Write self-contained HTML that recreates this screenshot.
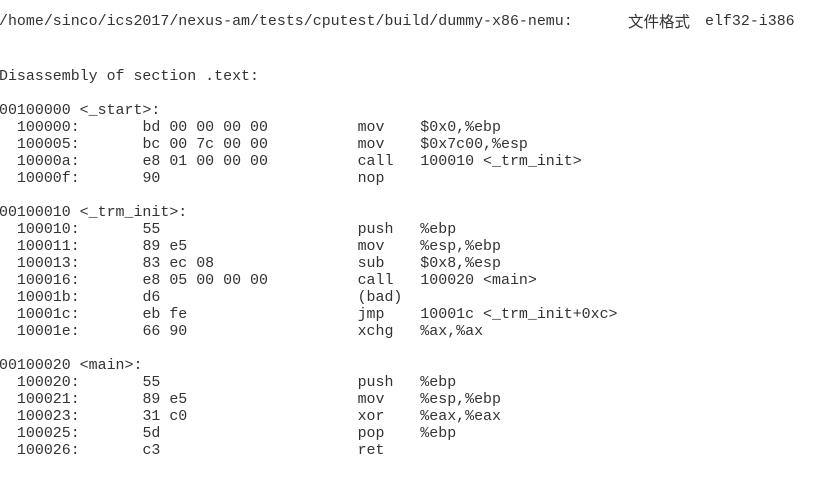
<!DOCTYPE html>
<html><head><meta charset="utf-8"><style>
html,body{margin:0;padding:0;background:#fff;width:820px;height:485px;overflow:hidden}
pre{position:absolute;margin:0;font-family:"Liberation Mono","Noto Sans CJK SC",monospace;font-size:14.95px;line-height:17px;color:#333;white-space:pre}
.h{position:absolute;top:14px;font-family:"Liberation Mono",monospace;font-size:14.95px;color:#333;white-space:pre;line-height:17px}
.c{font-family:"Noto Sans CJK SC",sans-serif;font-size:15.5px}
</style></head><body>
<div class="h" style="left:-1px">/home/sinco/ics2017/nexus-am/tests/cputest/build/dummy-x86-nemu:</div>
<div class="h" style="left:628px;top:13px"><span class="c">文件格式</span></div>
<div class="h" style="left:705px">elf32-i386</div>
<pre style="left:-1px;top:69px">Disassembly of section .text:

00100000 &lt;_start&gt;:
  100000:	bd 00 00 00 00       	mov    $0x0,%ebp
  100005:	bc 00 7c 00 00       	mov    $0x7c00,%esp
  10000a:	e8 01 00 00 00       	call   100010 &lt;_trm_init&gt;
  10000f:	90                   	nop

00100010 &lt;_trm_init&gt;:
  100010:	55                   	push   %ebp
  100011:	89 e5                	mov    %esp,%ebp
  100013:	83 ec 08             	sub    $0x8,%esp
  100016:	e8 05 00 00 00       	call   100020 &lt;main&gt;
  10001b:	d6                   	(bad)  
  10001c:	eb fe                	jmp    10001c &lt;_trm_init+0xc&gt;
  10001e:	66 90                	xchg   %ax,%ax

00100020 &lt;main&gt;:
  100020:	55                   	push   %ebp
  100021:	89 e5                	mov    %esp,%ebp
  100023:	31 c0                	xor    %eax,%eax
  100025:	5d                   	pop    %ebp
  100026:	c3                   	ret    
</pre>
</body></html>
